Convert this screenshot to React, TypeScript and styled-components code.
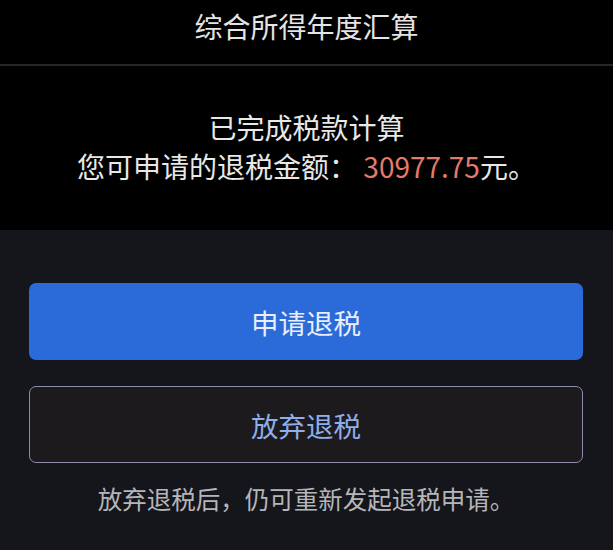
import styled, { createGlobalStyle } from "styled-components";

const GlobalStyle = createGlobalStyle`
  html, body {
    margin: 0;
    padding: 0;
    background: #14161c;
  }
  body {
    font-family: "Noto Sans CJK SC", "Noto Sans", sans-serif;
  }
`;

export default function App() {
  return (
    <StyledPage>
      <GlobalStyle />
      <StyledHeader>
        <StyledTitle>综合所得年度汇算</StyledTitle>
      </StyledHeader>
      <StyledSummary>
        <StyledLine>已完成税款计算</StyledLine>
        <StyledLine>
          您可申请的退税金额： <StyledAmount>30977.75</StyledAmount>元。
        </StyledLine>
      </StyledSummary>
      <StyledActions>
        <StyledButton $variant="primary">申请退税</StyledButton>
        <StyledButton $variant="outline">放弃退税</StyledButton>
        <StyledNote>放弃退税后，仍可重新发起退税申请。</StyledNote>
      </StyledActions>
    </StyledPage>
  );
}

const StyledPage = styled.div`
  width: 613px;
  height: 550px;
  display: flex;
  flex-direction: column;
  background: #14161c;
  overflow: hidden;
`;

const StyledHeader = styled.header`
  height: 66px;
  box-sizing: border-box;
  padding-top: 8px;
  display: flex;
  justify-content: center;
  align-items: flex-start;
  background: #000;
  border-bottom: 2px solid #262626;
`;

const StyledTitle = styled.h1`
  margin: 0;
  font-size: 28px;
  line-height: 36px;
  font-weight: 400;
  color: #e4e4e4;
`;

const StyledSummary = styled.section`
  height: 164px;
  box-sizing: border-box;
  padding-top: 42px;
  display: flex;
  flex-direction: column;
  align-items: center;
  background: #000;
`;

const StyledLine = styled.p`
  margin: 0;
  font-size: 28px;
  line-height: 39px;
  color: #e8e8e8;
  white-space: pre;
`;

const StyledAmount = styled.span`
  color: #e47a6a;
`;

const StyledActions = styled.section`
  flex: 1;
  display: flex;
  flex-direction: column;
  padding: 53px 30px 0 29px;
  gap: 26px;
`;

const StyledButton = styled.button<{ $variant: "primary" | "outline" }>`
  height: 77px;
  box-sizing: border-box;
  border-radius: 7px;
  font-family: inherit;
  font-size: 27.5px;
  font-weight: 400;
  display: flex;
  align-items: center;
  justify-content: center;
  cursor: pointer;
  ${({ $variant }) =>
    $variant === "primary"
      ? `
    background: #2a6bd9;
    border: none;
    color: #e9eefa;
  `
      : `
    background: #1d1a1e;
    border: 1.5px solid #8d8ca8;
    color: #8eafe8;
  `}
`;

const StyledNote = styled.p`
  margin: -7px 0 0;
  text-align: center;
  font-size: 24.5px;
  line-height: 34px;
  color: #b6b6ba;
`;
